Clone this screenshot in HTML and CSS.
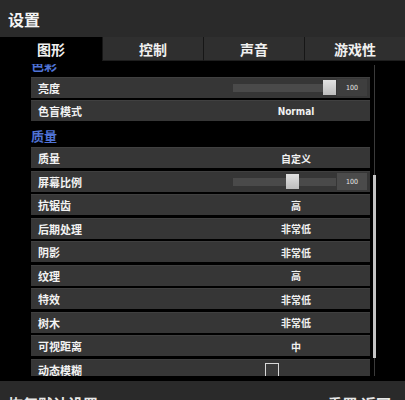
FILE: index.html
```html
<!DOCTYPE html>
<html lang="zh">
<head>
<meta charset="utf-8">
<link rel="stylesheet" href="styles.css">
</head>
<body>
<div class="screen">
  <div class="header"><span class="title">设置</span></div>
  <div class="tabs">
    <div class="tab active">图形</div>
    <div class="tab">控制</div>
    <div class="tab">声音</div>
    <div class="tab">游戏性</div>
  </div>
  <div class="content">
    <div class="list">
      <div class="section">色彩</div>
      <div class="row">
        <div class="label">亮度</div>
        <div class="value slider">
          <div class="track"><div class="fill" style="width:90px"></div><div class="thumb"></div></div>
          <div class="num">100</div>
        </div>
      </div>
      <div class="row"><div class="label">色盲模式</div><div class="value latin">Normal</div></div>
      <div class="section">质量</div>
      <div class="row"><div class="label">质量</div><div class="value">自定义</div></div>
      <div class="row">
        <div class="label">屏幕比例</div>
        <div class="value slider">
          <div class="track"><div class="fill" style="width:53px"></div><div class="thumb"></div><div class="rest"></div></div>
          <div class="num alt">100</div>
        </div>
      </div>
      <div class="row"><div class="label">抗锯齿</div><div class="value">高</div></div>
      <div class="row"><div class="label">后期处理</div><div class="value">非常低</div></div>
      <div class="row"><div class="label">阴影</div><div class="value">非常低</div></div>
      <div class="row"><div class="label">纹理</div><div class="value">高</div></div>
      <div class="row"><div class="label">特效</div><div class="value">非常低</div></div>
      <div class="row"><div class="label">树木</div><div class="value">非常低</div></div>
      <div class="row"><div class="label">可视距离</div><div class="value">中</div></div>
      <div class="row"><div class="label">动态模糊</div><div class="value check"><span class="box"></span></div></div>
    </div>
    <div class="scroll"><div class="thumbbar"></div></div>
  </div>
  <div class="footer">
    <span class="foot-left">恢复默认设置</span>
    <span class="foot-right">重置 返回</span>
  </div>
</div>
</body>
</html>
```
FILE: styles.css
```css
html, body {
  margin: 0;
  padding: 0;
  background: #000;
}
body {
  width: 405px;
  height: 400px;
  overflow: hidden;
  font-family: "Noto Sans CJK SC", "DejaVu Sans", sans-serif;
  color: #f2f2f2;
}
.screen {
  display: flex;
  flex-direction: column;
  height: 400px;
}
.header {
  height: 37px;
  background: #2a2a2a;
  display: flex;
  align-items: center;
  padding-left: 8px;
  box-sizing: border-box;
  flex: none;
}
.title {
  font-size: 16px;
  font-weight: bold;
  color: #f4f4f4;
  margin-top: 1px;
}
.tabs {
  display: grid;
  grid-template-columns: 102px 101px 101px 101px;
  height: 24px;
  flex: none;
}
.tab {
  background: #2f2f2f;
  border-left: 1px solid #161616;
  border-bottom: 1px solid #1e1e1e;
  display: flex;
  align-items: center;
  justify-content: center;
  font-size: 14px;
  font-weight: bold;
  color: #f0f0f0;
}
.tab.active {
  background: #000;
  border-left: none;
  border-bottom: none;
}
.content {
  margin-top: 3px;
  height: 312px;
  overflow: hidden;
  display: flex;
  flex: none;
}
.list {
  margin-left: 31px;
  width: 339px;
  margin-top: -11px;
  flex: none;
}
.section {
  height: 23.5px;
  display: flex;
  align-items: center;
  font-size: 13px;
  font-weight: bold;
  color: #4f73d6;
}
.row {
  height: 21px;
  margin-bottom: 2.5px;
  background: #363636;
  border-top: 1px solid #404040;
  box-sizing: border-box;
  display: grid;
  grid-template-columns: 1fr 148px;
  align-items: center;
}
.label {
  padding-left: 7px;
  font-size: 11px;
  font-weight: bold;
  color: #f2f2f2;
}
.value {
  text-align: center;
  font-size: 10px;
  font-weight: bold;
  color: #f0f0f0;
}
.value.latin {
  font-family: "DejaVu Sans Condensed", "DejaVu Sans", sans-serif;
  font-size: 10px;
}
.slider {
  display: flex;
  align-items: center;
  height: 100%;
  padding-left: 11px;
  padding-right: 3px;
  box-sizing: border-box;
}
.track {
  width: 103px;
  height: 8px;
  display: flex;
  align-items: center;
  flex: none;
}
.fill {
  height: 8px;
  background: #4a4a4a;
  flex: none;
}
.rest {
  height: 8px;
  flex: 1;
  background: #4a4a4a;
}
.thumb {
  width: 13px;
  height: 15px;
  background: linear-gradient(#e2e2e2, #bdbdbd);
  flex: none;
}
.num {
  margin-left: 1px;
  width: 30px;
  height: 17px;
  background: #3e3e3e;
  display: flex;
  align-items: center;
  justify-content: center;
  font-family: "DejaVu Sans Condensed", "DejaVu Sans", sans-serif;
  font-size: 7px;
  font-weight: normal;
  color: #e6e6e6;
  flex: none;
}
.num.alt {
  background: #4b4b4b;
}
.check {
  display: flex;
  justify-content: flex-start;
  height: 100%;
  padding-top: 3px;
  box-sizing: border-box;
}
.box {
  margin-left: 43px;
  width: 14px;
  height: 14px;
  border: 1px solid #d8d8d8;
  background: #3a3a3a;
  box-sizing: border-box;
}
.scroll {
  margin-left: 3px;
  margin-top: 1px;
  width: 3px;
  display: flex;
  justify-content: center;
  background: linear-gradient(to right, transparent 1px, #3a3a3a 1px, #3a3a3a 2px, transparent 2px);
  flex: none;
}
.thumbbar {
  margin-top: 110px;
  width: 3px;
  height: 183px;
  background: #c4c4c4;
}
.footer {
  margin-top: 5px;
  flex: 1;
  background: #2a2a2a;
  display: flex;
  justify-content: space-between;
  padding: 14px 14px 0 8px;
  box-sizing: border-box;
  overflow: hidden;
  font-size: 15px;
  font-weight: bold;
  color: #e8e8e8;
  line-height: 18px;
}
```
